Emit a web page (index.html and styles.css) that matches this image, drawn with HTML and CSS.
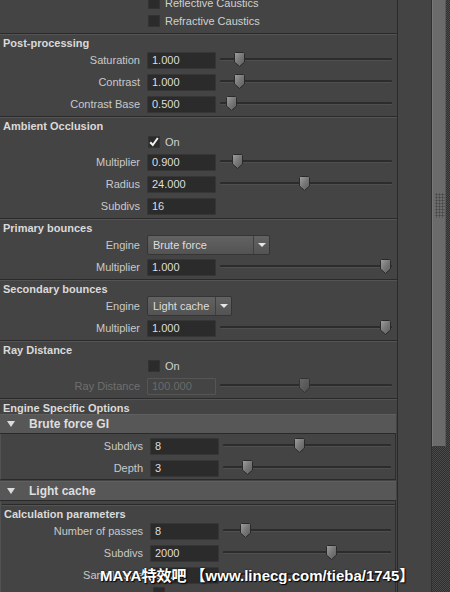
FILE: index.html
```html
<!DOCTYPE html>
<html>
<head>
<meta charset="utf-8">
<link rel="stylesheet" href="styles.css">
</head>
<body>
<svg class="defs" width="0" height="0" aria-hidden="true">
  <defs>
    <linearGradient id="tg" x1="0" y1="0" x2="1" y2="1">
      <stop offset="0" stop-color="#a0a0a0"/>
      <stop offset="0.5" stop-color="#777"/>
      <stop offset="1" stop-color="#5c5c5c"/>
    </linearGradient>
    <linearGradient id="tgd" x1="0" y1="0" x2="1" y2="1">
      <stop offset="0" stop-color="#6a6a6a"/>
      <stop offset="1" stop-color="#4c4c4c"/>
    </linearGradient>
  </defs>
</svg>
<div class="app">
  <div class="panel">
    <div class="sec top">
      <div class="row cbrow"><span class="cb"></span><span class="cbl">Reflective Caustics</span></div>
      <div class="row cbrow"><span class="cb"></span><span class="cbl">Refractive Caustics</span></div>
    </div>

    <div class="sec">
      <div class="sep"></div>
      <div class="head">Post-processing</div>
      <div class="row"><span class="lab">Saturation</span><span class="fld">1.000</span><div class="sl"><div class="track"></div><svg class="thumb" style="left:14px" viewBox="0 0 11 15"><path d="M1.5 .5h8l1 1v8.5l-5 4.5-5-4.5V1.5z"/></svg></div></div>
      <div class="row"><span class="lab">Contrast</span><span class="fld">1.000</span><div class="sl"><div class="track"></div><svg class="thumb" style="left:14px" viewBox="0 0 11 15"><path d="M1.5 .5h8l1 1v8.5l-5 4.5-5-4.5V1.5z"/></svg></div></div>
      <div class="row"><span class="lab">Contrast Base</span><span class="fld">0.500</span><div class="sl"><div class="track"></div><svg class="thumb" style="left:6px" viewBox="0 0 11 15"><path d="M1.5 .5h8l1 1v8.5l-5 4.5-5-4.5V1.5z"/></svg></div></div>
    </div>

    <div class="sec">
      <div class="sep"></div>
      <div class="head">Ambient Occlusion</div>
      <div class="row cbrow"><span class="cb on"><svg viewBox="0 0 12 12"><path d="M2.2 6.2l2.6 2.8 5-7"/></svg></span><span class="cbl">On</span></div>
      <div class="row"><span class="lab">Multiplier</span><span class="fld">0.900</span><div class="sl"><div class="track"></div><svg class="thumb" style="left:12px" viewBox="0 0 11 15"><path d="M1.5 .5h8l1 1v8.5l-5 4.5-5-4.5V1.5z"/></svg></div></div>
      <div class="row"><span class="lab">Radius</span><span class="fld">24.000</span><div class="sl"><div class="track"></div><svg class="thumb" style="left:79px" viewBox="0 0 11 15"><path d="M1.5 .5h8l1 1v8.5l-5 4.5-5-4.5V1.5z"/></svg></div></div>
      <div class="row"><span class="lab">Subdivs</span><span class="fld">16</span></div>
    </div>

    <div class="sec">
      <div class="sep"></div>
      <div class="head">Primary bounces</div>
      <div class="row"><span class="lab">Engine</span><div class="dd wide"><span class="ddt">Brute force</span><span class="dda"><i></i></span></div></div>
      <div class="row"><span class="lab">Multiplier</span><span class="fld">1.000</span><div class="sl"><div class="track"></div><svg class="thumb" style="left:160px" viewBox="0 0 11 15"><path d="M1.5 .5h8l1 1v8.5l-5 4.5-5-4.5V1.5z"/></svg></div></div>
    </div>

    <div class="sec">
      <div class="sep"></div>
      <div class="head">Secondary bounces</div>
      <div class="row"><span class="lab">Engine</span><div class="dd narrow"><span class="ddt">Light cache</span><span class="dda"><i></i></span></div></div>
      <div class="row"><span class="lab">Multiplier</span><span class="fld">1.000</span><div class="sl"><div class="track"></div><svg class="thumb" style="left:160px" viewBox="0 0 11 15"><path d="M1.5 .5h8l1 1v8.5l-5 4.5-5-4.5V1.5z"/></svg></div></div>
    </div>

    <div class="sec">
      <div class="sep"></div>
      <div class="head">Ray Distance</div>
      <div class="row cbrow"><span class="cb"></span><span class="cbl">On</span></div>
      <div class="row dis"><span class="lab">Ray Distance</span><span class="fld">100.000</span><div class="sl"><div class="track"></div><svg class="thumb" style="left:79px" viewBox="0 0 11 15"><path d="M1.5 .5h8l1 1v8.5l-5 4.5-5-4.5V1.5z"/></svg></div></div>
    </div>

    <div class="sec last">
      <div class="sep"></div>
      <div class="head">Engine Specific Options</div>
    </div>

    <div class="frame">
      <div class="fhead"><span class="tri"></span><span class="ftitle">Brute force GI</span></div>
      <div class="fbody">
        <div class="row"><span class="lab">Subdivs</span><span class="fld">8</span><div class="sl"><div class="track"></div><svg class="thumb" style="left:71px" viewBox="0 0 11 15"><path d="M1.5 .5h8l1 1v8.5l-5 4.5-5-4.5V1.5z"/></svg></div></div>
        <div class="row"><span class="lab">Depth</span><span class="fld">3</span><div class="sl"><div class="track"></div><svg class="thumb" style="left:19px" viewBox="0 0 11 15"><path d="M1.5 .5h8l1 1v8.5l-5 4.5-5-4.5V1.5z"/></svg></div></div>
      </div>
    </div>

    <div class="frame">
      <div class="fhead"><span class="tri"></span><span class="ftitle">Light cache</span></div>
      <div class="fbody lc">
        <div class="sec last">
          <div class="sep"></div>
          <div class="head">Calculation parameters</div>
          <div class="row"><span class="lab">Number of passes</span><span class="fld">8</span><div class="sl"><div class="track"></div><svg class="thumb" style="left:17px" viewBox="0 0 11 15"><path d="M1.5 .5h8l1 1v8.5l-5 4.5-5-4.5V1.5z"/></svg></div></div>
          <div class="row"><span class="lab">Subdivs</span><span class="fld">2000</span><div class="sl"><div class="track"></div><svg class="thumb" style="left:103px" viewBox="0 0 11 15"><path d="M1.5 .5h8l1 1v8.5l-5 4.5-5-4.5V1.5z"/></svg></div></div>
          <div class="row"><span class="lab">Sample size</span><span class="fld">0.020</span><div class="sl"><div class="track"></div></div></div>
          <div class="row cbrow last-cb"><span class="cb fcb"></span></div>
        </div>
      </div>
    </div>
  </div>
  <div class="vline"></div>
  <div class="gutter"></div>
  <div class="scroll">
    <div class="sthumb"><div class="grip"></div></div>
  </div>
</div>
<div class="watermark">MAYA特效吧 【www.linecg.com/tieba/1745】</div>
</body>
</html>
```

FILE: styles.css
```css
html, body {
  margin: 0;
  padding: 0;
}
body {
  width: 450px;
  height: 592px;
  overflow: hidden;
  position: relative;
  background: #444444;
  font-family: "Liberation Sans", Arial, sans-serif;
  font-size: 11px;
  color: #c9c9c9;
}
.defs {
  position: absolute;
  width: 0;
  height: 0;
}
.app {
  display: flex;
  height: 592px;
}
.panel {
  width: 397px;
  flex: none;
  overflow: hidden;
  height: 592px;
}
.vline {
  width: 1px;
  flex: none;
  background: #2a2a2a;
}
.gutter {
  width: 33px;
  flex: none;
  background: #444444;
}
.scroll {
  width: 19px;
  flex: none;
  box-sizing: border-box;
  border-left: 1px solid #303030;
  background: repeating-conic-gradient(#2e2e2e 0 25%, #4b4b4b 0 50%) 0 0 / 2px 2px;
}
.sthumb {
  width: 14px;
  height: 447px;
  box-sizing: border-box;
  background: #6b6b6b;
  border-left: 1px solid #787878;
  border-right: 1px solid #5a5a5a;
  border-bottom: 1px solid #3a3a3a;
  position: relative;
}
.grip {
  position: absolute;
  left: 2px;
  top: 193px;
  width: 10px;
  height: 25px;
  background: radial-gradient(circle, #444 0.8px, transparent 1.2px) 0 0 / 3px 3px;
}

/* sections */
.sec {
  padding-bottom: 1px;
}
.sec.top {
  margin-top: -6px;
  padding-bottom: 3px;
}
.sec.last {
  padding-bottom: 0;
}
.sep {
  height: 2px;
  background: linear-gradient(#2a2a2a 50%, #545454 50%);
}
.head {
  height: 14px;
  box-sizing: border-box;
  padding: 2px 0 0 3px;
  line-height: 12px;
  font-weight: bold;
  color: #dadada;
  white-space: nowrap;
}

/* rows */
.row {
  display: flex;
  align-items: center;
  height: 22px;
}
.cbrow {
  height: 19px;
}
.sec.top .cbrow {
  height: 18px;
}
.last-cb {
  align-items: flex-start;
  padding-top: 1px;
  box-sizing: border-box;
}
.lab {
  width: 140px;
  flex: none;
  text-align: right;
  white-space: nowrap;
  color: #c9c9c9;
}
.fld {
  margin-left: 7px;
  width: 69px;
  height: 17px;
  flex: none;
  box-sizing: border-box;
  background: #2b2b2b;
  border: 1px solid #363636;
  border-radius: 1px;
  padding-left: 4px;
  line-height: 15px;
  color: #dedede;
}
.sl {
  position: relative;
  width: 172px;
  height: 22px;
  margin-left: 4px;
  flex: none;
}
.track {
  position: absolute;
  left: 0;
  right: 0;
  top: 9px;
  height: 2px;
  background: #2c2c2c;
  border-bottom: 1px solid #4f4f4f;
  border-radius: 1px;
}
.thumb {
  position: absolute;
  top: 3px;
  width: 11px;
  height: 15px;
}
.thumb path {
  fill: url(#tg);
  stroke: #2a2a2a;
  stroke-width: 1;
}
.dis .lab {
  color: #6f6f6f;
}
.dis .fld {
  background: #444;
  border-color: #555;
  color: #6a6a6a;
}
.dis .thumb path {
  fill: url(#tgd);
  stroke: #333;
}

/* checkboxes */
.cb {
  margin-left: 148px;
  width: 12px;
  height: 12px;
  flex: none;
  box-sizing: border-box;
  background: #2b2b2b;
  border: 1px solid #333;
  display: flex;
}
.cb svg {
  width: 12px;
  height: 12px;
  margin: -1px;
}
.cb svg path {
  fill: none;
  stroke: #f2f2f2;
  stroke-width: 2;
}
.cbl {
  margin-left: 5px;
  color: #d0d0d0;
  white-space: nowrap;
}

/* dropdowns */
.dd {
  margin-left: 7px;
  height: 20px;
  flex: none;
  box-sizing: border-box;
  display: flex;
  align-items: center;
  background: linear-gradient(#626262, #535353);
  border: 1px solid #353535;
  border-radius: 2px;
  color: #dedede;
}
.dd.wide {
  width: 123px;
}
.dd.narrow {
  width: 85px;
}
.ddt {
  flex: 1;
  padding-left: 5px;
  white-space: nowrap;
}
.dda {
  width: 15px;
  height: 100%;
  border-left: 1px solid #3f3f3f;
  display: flex;
  align-items: center;
  justify-content: center;
}
.dda i {
  width: 0;
  height: 0;
  border-left: 4px solid transparent;
  border-right: 4px solid transparent;
  border-top: 4px solid #e6e6e6;
}

/* frames */
.fhead {
  width: 396px;
  height: 20px;
  box-sizing: border-box;
  background: #575757;
  border-top: 1px solid #5f5f5f;
  border-bottom: 1px solid #2a2a2a;
  display: flex;
  align-items: center;
}
.tri {
  margin-left: 7px;
  width: 0;
  height: 0;
  border-left: 4.5px solid transparent;
  border-right: 4.5px solid transparent;
  border-top: 6px solid #dcdcdc;
}
.ftitle {
  margin-left: 14px;
  font-weight: bold;
  font-size: 12px;
  color: #dedede;
}
.fbody {
  width: 396px;
  box-sizing: border-box;
  border-left: 1px solid #525252;
  border-right: 1px solid #2e2e2e;
  border-bottom: 1px solid #2a2a2a;
  padding: 1px 0 0 1px;
  margin-bottom: 1px;
}
.fbody.lc {
  padding-top: 3px;
  border-bottom: none;
}
.fbody .lab {
  width: 141px;
}
.fbody .sl {
  width: 168px;
}
.fbody .head {
  padding-left: 2px;
}
.fcb {
  margin-left: 151px;
}

/* watermark overlay */
.watermark {
  position: absolute;
  left: 100px;
  top: 567px;
  font-family: "Liberation Sans", "Noto Sans CJK SC", sans-serif;
  font-weight: bold;
  font-size: 15px;
  letter-spacing: 0;
  line-height: 18px;
  color: #ffffff;
  white-space: nowrap;
  text-shadow: 1px 1px 1px #000, 0 0 2px #111;
}
```
